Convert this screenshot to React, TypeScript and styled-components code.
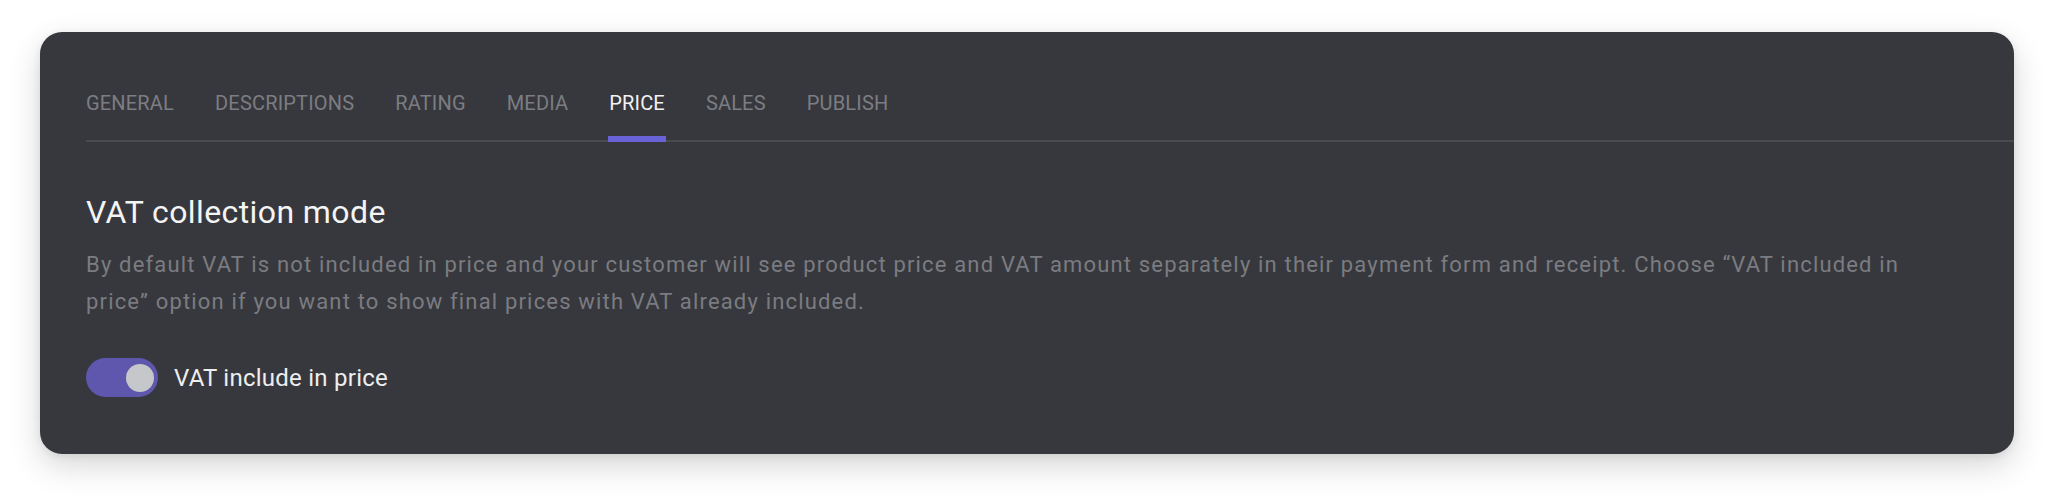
import React, { useState } from "react";
import styled, { createGlobalStyle } from "styled-components";

const GlobalStyle = createGlobalStyle`
  html, body {
    margin: 0;
    padding: 0;
    background: #ffffff;
  }
  body {
    font-family: Roboto, "Liberation Sans", Arial, sans-serif;
    -webkit-font-smoothing: antialiased;
  }
`;

const Page = styled.div`
  padding: 32px 40px 48px 40px;
  box-sizing: border-box;
`;

const Card = styled.section`
  background: #37383d;
  border-radius: 22px;
  box-shadow: 0 12px 32px rgba(0, 0, 0, 0.16), 0 2px 8px rgba(0, 0, 0, 0.08);
  padding: 59px 0 57px 46px;
  box-sizing: border-box;
`;

const TabBar = styled.nav`
  display: flex;
  align-items: flex-end;
  gap: 41px;
  border-bottom: 2px solid #4a4b51;
`;

const Tab = styled.button<{ $active?: boolean }>`
  position: relative;
  background: none;
  border: none;
  margin: 0;
  padding: 0 0 25px 0;
  font-family: Roboto, "Liberation Sans", Arial, sans-serif;
  font-size: 20px;
  line-height: 24px;
  letter-spacing: 0.18px;
  font-weight: 400;
  text-transform: uppercase;
  color: ${(p) => (p.$active ? "#f2f2f3" : "#7c7d82")};
  cursor: pointer;

  &::after {
    content: "";
    position: absolute;
    left: -1px;
    right: -1px;
    bottom: -2px;
    height: 6px;
    background: ${(p) => (p.$active ? "#6a63d8" : "transparent")};
  }
`;

const Content = styled.div`
  padding-right: 80px;
`;

const Heading = styled.h2`
  margin: 51px 0 0 0;
  font-size: 32px;
  line-height: 38px;
  letter-spacing: 0.4px;
  font-weight: 400;
  color: #f4f4f5;
`;

const Description = styled.p`
  margin: 15px 0 0 0;
  font-size: 22px;
  line-height: 37px;
  letter-spacing: 1.17px;
  font-weight: 400;
  color: #7b7c81;
`;

const ToggleRow = styled.label`
  display: flex;
  align-items: center;
  gap: 16px;
  margin-top: 38px;
  cursor: pointer;
`;

const Track = styled.span<{ $on: boolean }>`
  display: flex;
  align-items: center;
  justify-content: ${(p) => (p.$on ? "flex-end" : "flex-start")};
  width: 72px;
  height: 39px;
  padding: 0 4px;
  box-sizing: border-box;
  border-radius: 20px;
  background: ${(p) => (p.$on ? "#5e57ad" : "#55565c")};
`;

const Knob = styled.span`
  width: 28px;
  height: 28px;
  border-radius: 50%;
  background: #c6c7ca;
`;

const ToggleLabel = styled.span`
  font-size: 24px;
  line-height: 30px;
  letter-spacing: 0.25px;
  color: #eeeeef;
`;

const tabs = ["General", "Descriptions", "Rating", "Media", "Price", "Sales", "Publish"];

export default function App() {
  const [active, setActive] = useState("Price");
  const [on, setOn] = useState(true);
  return (
    <>
      <GlobalStyle />
      <Page>
        <Card>
          <TabBar>
            {tabs.map((t) => (
              <Tab key={t} $active={t === active} onClick={() => setActive(t)}>
                {t}
              </Tab>
            ))}
          </TabBar>
          <Content>
            <Heading>VAT collection mode</Heading>
            <Description>
              By default VAT is not included in price and your customer will see product price and VAT amount
              separately in their payment form and receipt. Choose “VAT included in price” option if you want to
              show final prices with VAT already included.
            </Description>
            <ToggleRow onClick={() => setOn(!on)}>
              <Track $on={on}>
                <Knob />
              </Track>
              <ToggleLabel>VAT include in price</ToggleLabel>
            </ToggleRow>
          </Content>
        </Card>
      </Page>
    </>
  );
}
